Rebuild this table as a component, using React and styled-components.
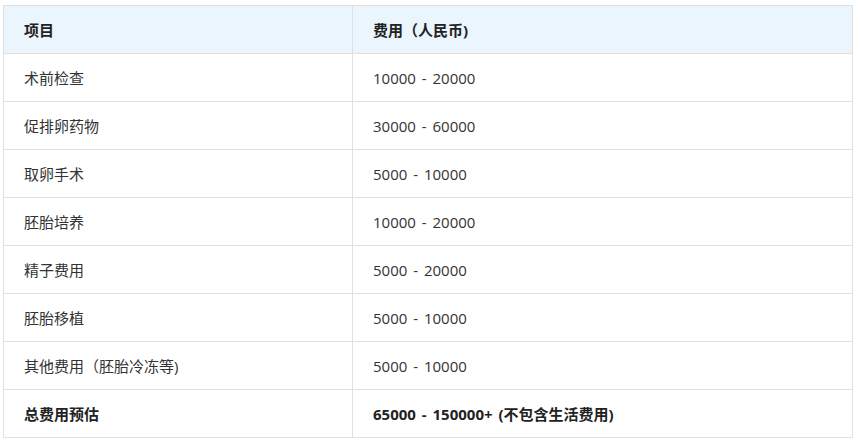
import styled, { createGlobalStyle } from "styled-components";

const GlobalStyle = createGlobalStyle`
  body {
    margin: 0;
    background: #ffffff;
    font-family: "Open Sans", "Noto Sans CJK SC", sans-serif;
  }
`;

const Wrapper = styled.div`
  padding: 5px 0 0 3px;
`;

const Table = styled.table`
  width: 850px;
  border-collapse: collapse;
  table-layout: fixed;
  font-size: 15px;
  line-height: 20px;
  word-spacing: 2px;
  color: #333333;
`;

const HeadCell = styled.th`
  height: 47px;
  padding: 0 20px;
  text-align: left;
  font-weight: 700;
  background: #ebf5fe;
  border: 1px solid #e1e1e1;
  color: #222222;
`;

const Cell = styled.td`
  height: 47px;
  padding: 0 20px;
  border: 1px solid #e1e1e1;
  font-weight: ${(p) => (p.$bold ? 700 : 400)};
  color: ${(p) => (p.$bold ? "#222222" : "#333333")};
`;

const rows = [
  ["术前检查", "10000 - 20000"],
  ["促排卵药物", "30000 - 60000"],
  ["取卵手术", "5000 - 10000"],
  ["胚胎培养", "10000 - 20000"],
  ["精子费用", "5000 - 20000"],
  ["胚胎移植", "5000 - 10000"],
  ["其他费用（胚胎冷冻等)", "5000 - 10000"],
];

export default function App() {
  return (
    <Wrapper>
      <GlobalStyle />
      <Table>
        <colgroup>
          <col style={{ width: 349 }} />
          <col />
        </colgroup>
        <thead>
          <tr>
            <HeadCell>项目</HeadCell>
            <HeadCell>费用（人民币)</HeadCell>
          </tr>
        </thead>
        <tbody>
          {rows.map(([name, cost]) => (
            <tr key={name}>
              <Cell>{name}</Cell>
              <Cell>{cost}</Cell>
            </tr>
          ))}
          <tr>
            <Cell $bold>总费用预估</Cell>
            <Cell $bold>65000 - 150000+ (不包含生活费用)</Cell>
          </tr>
        </tbody>
      </Table>
    </Wrapper>
  );
}
